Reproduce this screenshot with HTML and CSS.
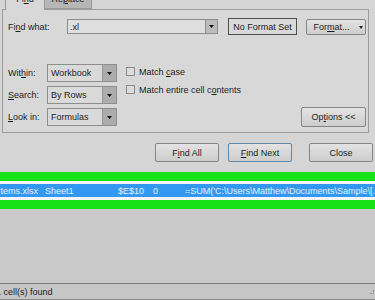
FILE: index.html
```html
<!DOCTYPE html>
<html>
<head>
<meta charset="utf-8">
<link rel="stylesheet" href="styles.css">
</head>
<body>
<div class="dialog">
  <div class="tabs">
    <div class="tab active"><span>Fi<u>n</u>d</span></div>
    <div class="tab"><span>Re<u>p</u>lace</span></div>
  </div>
  <div class="panel">
    <div class="find-row">
      <label class="lbl find-lbl">Fi<u>n</u>d what:</label>
      <div class="combo">
        <span class="combo-text">.xl</span>
        <span class="combo-arrow"><svg width="5" height="3" viewBox="0 0 5 3"><path d="M0 0H5L2.5 3Z" fill="#111"/></svg></span>
      </div>
      <div class="noformat">No Format Set</div>
      <div class="btn format-btn"><span>For<u>m</u>at...</span><svg class="fmt-arrow" width="4" height="3" viewBox="0 0 4 3"><path d="M0 0H4L2 3Z" fill="#222"/></svg></div>
    </div>
    <div class="opts">
      <div class="selects">
        <label class="lbl">Wit<u>h</u>in:</label>
        <div class="select"><span class="sel-text">Workbook</span><span class="sel-arrow"><svg width="5" height="3" viewBox="0 0 5 3"><path d="M0 0H5L2.5 3Z" fill="#111"/></svg></span></div>
        <label class="lbl"><u>S</u>earch:</label>
        <div class="select"><span class="sel-text">By Rows</span><span class="sel-arrow"><svg width="5" height="3" viewBox="0 0 5 3"><path d="M0 0H5L2.5 3Z" fill="#111"/></svg></span></div>
        <label class="lbl"><u>L</u>ook in:</label>
        <div class="select"><span class="sel-text">Formulas</span><span class="sel-arrow"><svg width="5" height="3" viewBox="0 0 5 3"><path d="M0 0H5L2.5 3Z" fill="#111"/></svg></span></div>
      </div>
      <div class="checks">
        <div class="check"><span class="box"></span><span>Match <u>c</u>ase</span></div>
        <div class="check"><span class="box"></span><span>Match entire cell c<u>o</u>ntents</span></div>
      </div>
      <div class="btn options-btn"><span>Op<u>t</u>ions &lt;&lt;</span></div>
    </div>
  </div>
  <div class="actions">
    <div class="btn action">F<u>i</u>nd All</div>
    <div class="btn action default"><u>F</u>ind Next</div>
    <div class="btn action close">Close</div>
  </div>
</div>
<div class="results">
  <div class="row">
    <span class="c-book">Items.xlsx</span>
    <span class="c-sheet">Sheet1</span>
    <span class="c-cell">$E$10</span>
    <span class="c-val">0</span>
    <span class="c-formula">=SUM('C:\Users\Matthew\Documents\Sample\[...</span>
  </div>
</div>
<div class="list"></div>
<div class="status"><span class="status-text">1 cell(s) found</span><span class="grip"></span></div>
</body>
</html>
```
FILE: styles.css
```css
* { box-sizing: border-box; }
html, body { margin: 0; padding: 0; }
body {
  width: 375px;
  height: 300px;
  overflow: hidden;
  background: #cbcbcb;
  font-family: "Liberation Sans", Arial, sans-serif;
  font-size: 9px;
  color: #1c1c1c;
  display: flex;
  flex-direction: column;
}
u { text-decoration-thickness: 1px; text-underline-offset: 1px; }

.dialog {
  height: 172px;
  background: #d5d5d5;
  display: flex;
  flex-direction: column;
}
.tabs {
  margin-top: -6px;
  height: 15px;
  display: flex;
  padding-left: 5px;
}
.tab {
  height: 15px;
  display: flex;
  justify-content: center;
  line-height: 11px;
  border: 1px solid #9a9a9a;
  border-top: none;
  border-bottom: none;
}
.tab.active {
  width: 40px;
  background: #d8d8d8;
  position: relative;
  z-index: 1;
  margin-bottom: -1px;
  height: 16px;
}
.tab:not(.active) {
  width: 47px;
  background: #b6b6b6;
  border-left: none;
  border-bottom: 1px solid #9a9a9a;
}
.panel {
  margin: 0 6px 0 2px;
  height: 124px;
  border: 1px solid #9c9c9c;
  background: #d8d8d8;
  padding: 8px 0 0 5px;
  display: flex;
  flex-direction: column;
}
.lbl { display: block; white-space: nowrap; }
.find-row {
  height: 17px;
  display: flex;
  align-items: center;
}
.find-lbl { width: 59px; }
.combo {
  width: 151px;
  height: 15px;
  border: 1px solid #8e8e8e;
  background: #dedede;
  display: flex;
  align-items: center;
}
.combo-text { flex: 1; padding-left: 2px; }
.combo-arrow {
  width: 12px;
  height: 100%;
  background: #bcbcbc;
  border-left: 1px solid #8e8e8e;
  display: flex;
  align-items: center;
  justify-content: center;
}
.noformat {
  margin-left: 10px;
  width: 69px;
  height: 17px;
  border: 1px solid #4d4d4d;
  background: #d9d9d9;
  display: flex;
  align-items: center;
  justify-content: center;
}
.btn {
  border: 1px solid #858585;
  border-radius: 2px;
  background: linear-gradient(#e3e3e3, #cdcdcd);
  display: flex;
  align-items: center;
  justify-content: center;
  white-space: nowrap;
}
.format-btn {
  margin-left: 9px;
  width: 60px;
  height: 16px;
  padding-left: 4px;
  gap: 9px;
}
.fmt-arrow { margin-top: 1px; }

.opts {
  margin-top: 29px;
  display: flex;
  align-items: flex-start;
}
.selects {
  display: grid;
  grid-template-columns: 39px 70px;
  grid-auto-rows: 18px;
  row-gap: 4px;
  align-items: center;
}
.select {
  height: 18px;
  border: 1px solid #8e8e8e;
  background: #dadada;
  display: flex;
  align-items: center;
}
.sel-text { flex: 1; padding-left: 3px; }
.sel-arrow {
  width: 14px;
  height: 100%;
  background: #acacac;
  border-left: 1px solid #969696;
  display: flex;
  align-items: center;
  justify-content: center;
}
.checks {
  margin-left: 9px;
  padding-top: 3px;
  display: flex;
  flex-direction: column;
  gap: 9px;
}
.check {
  display: flex;
  align-items: center;
  gap: 4px;
  height: 9px;
  white-space: nowrap;
}
.box {
  width: 9px;
  height: 9px;
  border: 1px solid #8a8a8a;
  background: #dcdcdc;
}
.options-btn {
  margin-left: auto;
  margin-right: 2px;
  margin-top: 43px;
  width: 65px;
  height: 20px;
}

.actions {
  margin-top: 10px;
  display: flex;
  justify-content: flex-end;
  padding-right: 2px;
}
.action { width: 64px; height: 19px; }
.action.default { margin-left: 9px; border-color: #5f89ab; }
.action.close { margin-left: 17px; }

.results {
  border-top: 9px solid #17e117;
  border-bottom: 9px solid #17e117;
  background: #f4f4f4;
  padding: 3px 0;
}
.row {
  height: 13px;
  background: #3399f0;
  color: #e4f1ff;
  display: flex;
  align-items: center;
  white-space: nowrap;
  overflow: hidden;
}
.c-book { width: 47px; margin-left: -2px; }
.c-sheet { width: 73px; }
.c-cell { width: 35px; }
.c-val { width: 32px; }
.c-formula { flex: 1; overflow: hidden; }

.list { flex: 1; background: #cacaca; }
.status {
  height: 17px;
  border-top: 1px solid #7c7c7c;
  border-bottom: 1px solid #8c8c8c;
  background: #c6c6c6;
  display: flex;
  align-items: center;
}
.status-text { margin-left: -4px; flex: 1; white-space: nowrap; }
.grip { width: 4px; height: 4px; margin-right: 1px; border-right: 1px dotted #888; border-bottom: 1px dotted #888; }
```
